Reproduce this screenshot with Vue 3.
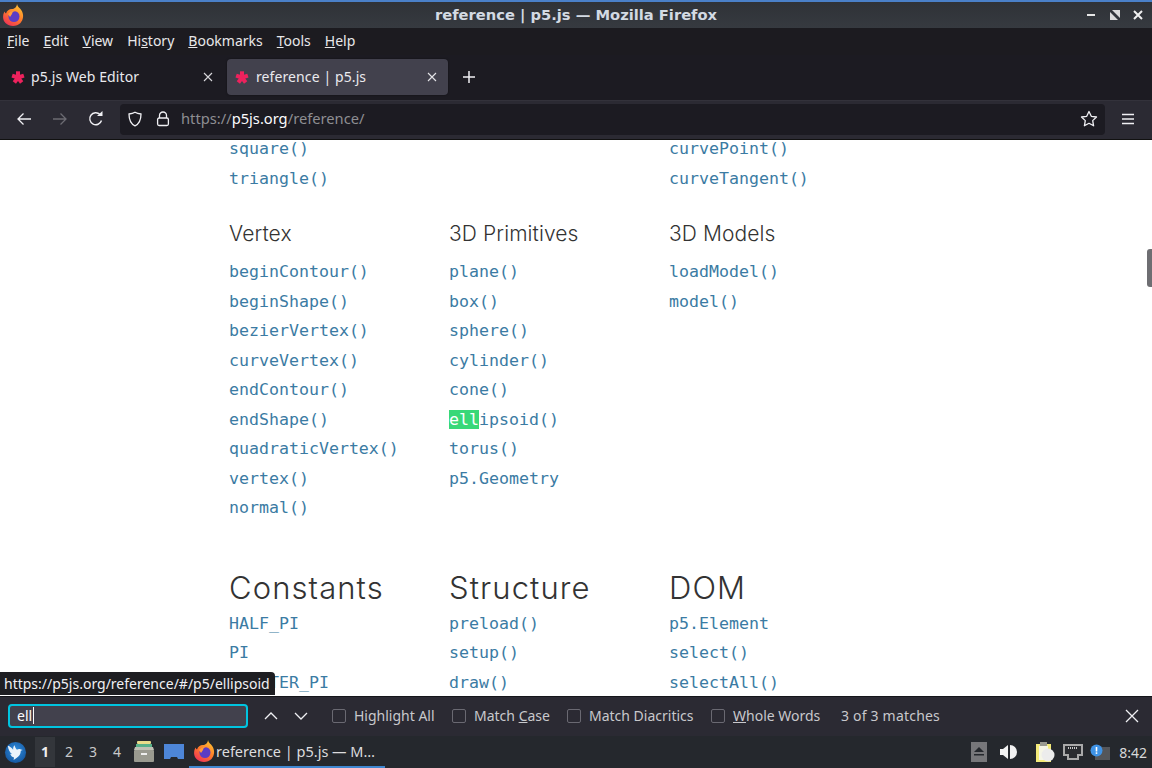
<script setup>
const menus = [
  { k: 'F', r: 'ile' }, { k: 'E', r: 'dit' }, { k: 'V', r: 'iew' },
  { a: 'Hi', k: 's', r: 'tory' }, { k: 'B', r: 'ookmarks' }, { k: 'T', r: 'ools' }, { k: 'H', r: 'elp' }
]
const topRows = [['square()', 'triangle()'], [], ['curvePoint()', 'curveTangent()']]
const mid = [
  { h: 'Vertex', items: ['beginContour()', 'beginShape()', 'bezierVertex()', 'curveVertex()', 'endContour()', 'endShape()', 'quadraticVertex()', 'vertex()', 'normal()'] },
  { h: '3D Primitives', items: ['plane()', 'box()', 'sphere()', 'cylinder()', 'cone()', 'ellipsoid()', 'torus()', 'p5.Geometry'] },
  { h: '3D Models', items: ['loadModel()', 'model()'] }
]
const low = [
  { h: 'Constants', items: ['HALF_PI', 'PI', 'QUARTER_PI'] },
  { h: 'Structure', items: ['preload()', 'setup()', 'draw()'] },
  { h: 'DOM', items: ['p5.Element', 'select()', 'selectAll()'] }
]
const checks = [
  { t: 'Highlight All', w: 119 }, { t: 'Match Case', w: 115 },
  { t: 'Match Diacritics', w: 144 }, { t: 'Whole Words', u: true, w: 130 }
]
const arms = [0, 72, 144, 216, 288]
</script>

<template>
  <div class="screen">
    <header class="titlebar">
      <svg class="fx" viewBox="0 0 24 24" width="24" height="24">
        <defs>
          <linearGradient id="fxo" x1="0.8" y1="0" x2="0.2" y2="1">
            <stop offset="0" stop-color="#ffc832" /><stop offset=".5" stop-color="#ff7a2a" /><stop offset="1" stop-color="#ee2f5a" />
          </linearGradient>
        </defs>
        <path d="M15 1c.5 3 3 4 4.500 6.500 2.500 4 2 9-1 12.500-4 4-11 4-15 0C.5 17 .5 12 2.500 8.500c.3 1 .8 1.500 1.500 2C5 7.500 7 6 10 6c2 0 5-2 5-5z" fill="url(#fxo)" />
        <circle cx="12" cy="13.500" r="5.500" fill="#5b3cc4" />
        <path d="M6 11c2-3 6-4 8-3-2 0-4 1-4 3l-2 3z" fill="#ff9a3c" />
      </svg>
      <div class="wintitle">reference | p5.js — Mozilla Firefox</div>
      <div class="winbtns">
        <svg viewBox="0 0 12 12" width="12" height="12"><rect x="1" y="5" width="8" height="2" fill="#e6e6e6" /></svg>
        <svg viewBox="0 0 12 12" width="12" height="12"><path d="M3 1h8v8zM1 3l8 8H1z" fill="#dcdcdc" /></svg>
        <svg viewBox="0 0 12 12" width="12" height="12"><path d="M2 2l8 8M10 2l-8 8" stroke="#f0f0f0" stroke-width="2" /></svg>
      </div>
    </header>

    <nav class="menubar">
      <span v-for="m in menus" :key="m.r" class="menu">{{ m.a }}<u>{{ m.k }}</u>{{ m.r }}</span>
    </nav>

    <div class="tabbar">
      <div class="tab">
        <svg class="star" viewBox="0 0 16 16" width="16" height="16"><path v-for="a in arms" :key="a" d="M8 8.500V2.300" stroke="#ed225d" stroke-width="4" :transform="`rotate(${a} 8 8.500)`" /></svg>
        <span class="tabtext">p5.js Web Editor</span>
        <svg class="close" viewBox="0 0 10 10" width="10" height="10"><path d="M1 1l8 8M9 1l-8 8" stroke="#d8d8dc" stroke-width="1.100" /></svg>
      </div>
      <div class="tab active">
        <svg class="star" viewBox="0 0 16 16" width="16" height="16"><path v-for="a in arms" :key="a" d="M8 8.500V2.300" stroke="#ed225d" stroke-width="4" :transform="`rotate(${a} 8 8.500)`" /></svg>
        <span class="tabtext">reference | p5.js</span>
        <svg class="close" viewBox="0 0 10 10" width="10" height="10"><path d="M1 1l8 8M9 1l-8 8" stroke="#e4e4e8" stroke-width="1.100" /></svg>
      </div>
      <svg class="plus" viewBox="0 0 14 14" width="14" height="14"><path d="M7 1v12M1 7h12" stroke="#f0f0f4" stroke-width="1.500" /></svg>
    </div>

    <div class="navbar">
      <svg class="navicon first" viewBox="0 0 16 16" width="16" height="16"><path d="M15 8H2M7.500 2.500L2 8l5.500 5.500" fill="none" stroke="#f0f0f4" stroke-width="1.300" /></svg>
      <svg class="navicon" viewBox="0 0 16 16" width="16" height="16"><path d="M1 8h13M8.500 2.500L14 8l-5.500 5.500" fill="none" stroke="#6c6b72" stroke-width="1.300" /></svg>
      <svg class="navicon" viewBox="0 0 16 16" width="16" height="16"><path d="M13.500 9.500A6 6 0 1 1 12 3.500" fill="none" stroke="#f0f0f4" stroke-width="1.400" /><path d="M9 5h5.500V0z" fill="#f0f0f4" /></svg>
      <div class="urlbar">
        <svg viewBox="0 0 16 16" width="16" height="16"><path d="M8 1.200c2 1.200 4 1.600 6 1.800 0 6-1.500 9.800-6 11.800C3.500 12.800 2 9 2 3c2-.2 4-.6 6-1.800z" fill="none" stroke="#f0f0f4" stroke-width="1.300" /></svg>
        <svg class="lock" viewBox="0 0 14 16" width="14" height="16"><path d="M3.500 7V4.500a3.500 3.500 0 0 1 7 0V7" fill="none" stroke="#f0f0f4" stroke-width="1.300" /><rect x="1.600" y="7" width="10.800" height="7.500" rx="1.500" fill="none" stroke="#f0f0f4" stroke-width="1.300" /></svg>
        <span class="url"><span class="dim">https://</span>p5js.org<span class="dim">/reference/</span></span>
        <svg class="bm" viewBox="0 0 18 18" width="18" height="18"><path d="M9 1.500l2.300 4.800 5.200.7-3.800 3.600.9 5.200L9 13.300l-4.600 2.500.9-5.200L1.500 7l5.200-.7z" fill="none" stroke="#f0f0f4" stroke-width="1.300" stroke-linejoin="round" /></svg>
      </div>
      <svg class="hamb" viewBox="0 0 14 12" width="14" height="12"><path d="M1 1.500h12M1 6h12M1 10.500h12" stroke="#f0f0f4" stroke-width="1.300" /></svg>
    </div>

    <main class="page">
      <div class="doc">
        <section class="grid">
          <div v-for="(col, i) in topRows" :key="i" class="col">
            <a v-for="t in col" :key="t" class="link">{{ t }}</a>
          </div>
        </section>
        <section class="grid middle">
          <div v-for="col in mid" :key="col.h" class="col">
            <h3>{{ col.h }}</h3>
            <a v-for="t in col.items" :key="t" class="link">
              <template v-if="t === 'ellipsoid()'"><mark>ell</mark>ipsoid()</template>
              <template v-else>{{ t }}</template>
            </a>
          </div>
        </section>
        <section class="grid lower">
          <div v-for="col in low" :key="col.h" class="col">
            <h2>{{ col.h }}</h2>
            <a v-for="t in col.items" :key="t" class="link">{{ t }}</a>
          </div>
        </section>
      </div>
      <div class="thumb"></div>
      <div class="status">https://p5js.org/reference/#/p5/ellipsoid</div>
    </main>

    <div class="findbar">
      <div class="findinput">ell<i class="caret"></i></div>
      <svg class="arrow up" viewBox="0 0 14 8" width="14" height="8"><path d="M1 7l6-6 6 6" fill="none" stroke="#f0f0f4" stroke-width="1.300" /></svg>
      <svg class="arrow" viewBox="0 0 14 8" width="14" height="8"><path d="M1 1l6 6 6-6" fill="none" stroke="#f0f0f4" stroke-width="1.300" /></svg>
      <div class="checks">
        <label v-for="c in checks" :key="c.t" class="check" :style="{ width: c.w + 'px' }">
          <i class="box"></i>
          <span v-if="c.u"><u>W</u>hole Words</span>
          <span v-else-if="c.t === 'Match Case'">Match <u>C</u>ase</span>
          <span v-else>{{ c.t }}</span>
        </label>
      </div>
      <span class="count">3 of 3 matches</span>
      <svg class="findclose" viewBox="0 0 14 14" width="14" height="14"><path d="M1 1l12 12M13 1L1 13" stroke="#f0f0f4" stroke-width="1.300" /></svg>
    </div>

    <footer class="taskbar">
      <svg class="start" viewBox="0 0 24 24" width="23" height="23">
        <defs>
          <radialGradient id="stb" cx=".5" cy=".4" r=".7"><stop offset="0" stop-color="#2f8fe0" /><stop offset="1" stop-color="#124f96" /></radialGradient>
        </defs>
        <circle cx="12" cy="12" r="11" fill="url(#stb)" />
        <path d="M4 5c2 .5 4 2 5.500 4C9.500 7 10 5.500 11 4.500c.5 2 1.200 3.500 2.500 4.500 1-.8 2.500-1 3.500-.5l2.500 1-2 .8c0 3-1.500 6-4.500 7.500l-3 2 .5-2.500c-2-.5-3.500-2-4-4l2 .5C6 12 4.500 9 4 5z" fill="#eaf3fb" />
      </svg>
      <div class="pager">
        <span class="desk on">1</span><span class="desk">2</span><span class="desk">3</span><span class="desk">4</span>
      </div>
      <svg class="launch" viewBox="0 0 22 22" width="22" height="22">
        <rect x="4" y="0" width="14" height="3" rx="1" fill="#e8dc8a" />
        <rect x="3" y="3" width="16" height="3" fill="#57b08a" />
        <path d="M2 6h18l1 3H1z" fill="#c0c0b4" />
        <rect x="1" y="9" width="20" height="12" rx="1" fill="#9a9a90" />
        <rect x="8" y="12" width="6" height="2" fill="#eee" />
      </svg>
      <svg class="launch folder" viewBox="0 0 22 18" width="22" height="18"><path d="M1 1h20v15h-6l-1-2H8l-1 2H1z" fill="#4d86d8" /></svg>
      <div class="task">
        <svg viewBox="0 0 24 24" width="24" height="24">
          <path d="M15 1c.5 3 3 4 4.500 6.500 2.500 4 2 9-1 12.500-4 4-11 4-15 0C.5 17 .5 12 2.500 8.500c.3 1 .8 1.500 1.500 2C5 7.500 7 6 10 6c2 0 5-2 5-5z" fill="url(#fxo)" />
          <circle cx="12" cy="13.500" r="5.500" fill="#5b3cc4" />
          <path d="M6 11c2-3 6-4 8-3-2 0-4 1-4 3l-2 3z" fill="#ff9a3c" />
        </svg>
        <span>reference | p5.js — M…</span>
      </div>
      <div class="tray">
        <svg viewBox="0 0 16 20" width="16" height="20"><rect width="16" height="20" fill="#77777a" /><path d="M8 5l5 5H3z" fill="#25282d" /><rect x="3" y="12" width="10" height="1.500" fill="#25282d" /></svg>
        <svg class="vol" viewBox="0 0 18 16" width="18" height="16"><path d="M1 5h3l5-4v14l-5-4H1z" fill="#f2f2f2" /><path d="M11 1a7 7 0 0 1 0 14z" fill="#f2f2f2" /></svg>
        <svg class="clip" viewBox="0 0 20 22" width="20" height="22"><rect x="1" y="3" width="15" height="18" fill="#f4eb7a" /><rect x="4" y="5" width="9" height="14" fill="#f6f6e6" /><rect x="5" y="1" width="7" height="4" fill="#9a9a90" /><circle cx="13" cy="14" r="6.500" fill="#ececec" /></svg>
        <svg class="net" viewBox="0 0 20 16" width="20" height="16"><path d="M1 1h18v10h-4v4H5v-4H1z" fill="#2a2c30" stroke="#a9a9a9" stroke-width="2" /><path d="M5 4h10" stroke="#c8c8c8" stroke-width="2" stroke-dasharray="1 1" /></svg>
        <svg class="notif" viewBox="0 0 20 16" width="20" height="16"><rect x="5" y="3" width="15" height="13" fill="#54565a" /><circle cx="6.500" cy="6.500" r="6" fill="#3f93e6" /><rect x="5.700" y="3" width="1.600" height="4.500" fill="#fff" /><rect x="5.700" y="8.300" width="1.600" height="1.600" fill="#fff" /></svg>
        <span class="clock">8:42</span>
      </div>
    </footer>
  </div>
</template>

<style>
html, body { margin: 0; background: #1c1b22; }
</style>

<style scoped>
.screen {
  width: 1152px; height: 768px; display: flex; flex-direction: column; overflow: hidden;
  font-family: "Noto Sans", sans-serif; color: #f0f0f4; font-size: 14px;
}
.titlebar {
  height: 26px; flex: none; border-top: 2px solid #4a80c8; display: flex; align-items: center;
  background: linear-gradient(#2f3237, #363a40); position: relative;
}
.fx { margin-left: 2px; }
.wintitle {
  position: absolute; left: 0; right: 0; top: 3px; text-align: center; font-family: "DejaVu Sans", sans-serif; font-weight: 700; font-size: 14.700px;
  color: #d3dae3; line-height: 20px;
}
.winbtns { margin-left: auto; display: flex; gap: 11px; padding-right: 8px; }
.menubar {
  height: 27px; box-sizing: border-box; padding: 0 0 2px 7px; flex: none; background: #1c1b20; display: flex; align-items: center; gap: 14px;
  color: #e8e8ea;
}
.menubar .menu { line-height: 20px; }
.tabbar {
  height: 45px; box-sizing: border-box; padding: 0 0 2px 3px; flex: none; display: flex; align-items: center; background: #1c1b22;
}
.tab {
  width: 221px; height: 36px; box-sizing: border-box; display: flex; align-items: center; padding: 0 11px 0 7px; border-radius: 4px;
  margin-right: 3px;
}
.tab.active { background: #42414d; box-shadow: 0 0 2px rgba(0,0,0,.5); }
.tabtext { margin-left: 6px; color: #eaeaee; letter-spacing: .1px; }
.tab:first-child .tabtext { margin-left: 5px; }
.close { margin-left: auto; }
.plus { margin-left: 11px; }
.navbar {
  height: 40px; flex: none; background: #2b2a33; display: flex; align-items: center; border-top: 1px solid #33323b;
  box-sizing: border-box; border-bottom: 1px solid #111; padding-bottom: 2px;
}
.navicon { margin-right: 20px; }
.navicon.first { margin-left: 16px; }
.urlbar {
  width: 985px; height: 31px; margin-left: -4px; background: #1c1b22; border-radius: 4px; display: flex; align-items: center;
  padding-left: 7px; box-sizing: border-box;
}
.lock { margin-left: 13px; }
.url { margin-left: 11px; font-size: 14.700px; color: #fbfbfe; line-height: 20px; padding-bottom: 2px; }
.dim { color: #8e8e92; }
.bm { margin-left: auto; margin-right: 7px; }
.hamb { margin-left: 16px; }
.page {
  flex: 1; background: #fff; position: relative; overflow: hidden; min-height: 0;
}
.doc { margin-top: -6px; padding-left: 229px; }
.grid { display: grid; grid-template-columns: repeat(3, 220px); }
.col { display: flex; flex-direction: column; align-items: flex-start; }
.link {
  font-family: "DejaVu Sans Mono", monospace; font-size: 16.600px; line-height: 29.500px; height: 29.500px; color: #3b7ba3;
}
mark { background: #38d878; color: #fff; }
h3 {
  margin: 0; font-family: Inter, sans-serif; font-weight: 350; font-size: 21px; line-height: 30px; color: #333; height: 47px;
  display: flex; align-items: center; letter-spacing: .1px;
}
h2 {
  margin: 0; font-family: Inter, sans-serif; font-weight: 300; font-size: 31px; line-height: 40px; color: #333; height: 41px;
  display: flex; align-items: center; letter-spacing: 1.100px;
}
.middle { margin-top: 17px; }
.lower { margin-top: 45px; height: 200px; }
.thumb { position: absolute; right: 0; top: 109px; width: 5px; height: 38px; background: #6e6e72; border-radius: 3px 0 0 3px; }
.status {
  position: absolute; left: 0; bottom: 1px; height: 23px; line-height: 23px; padding: 0 5px 0 4px; background: #1e1e22;
  color: #f0f0f4; font-size: 14px; border-radius: 0 4px 0 0;
}
.findbar {
  height: 41px; flex: none; background: #2b2a33; display: flex; align-items: center; border-top: 1px solid #15151a; box-sizing: border-box;
  color: #c8c8cc; padding-bottom: 3px;
}
.findinput {
  width: 240px; height: 24px; box-sizing: border-box; margin-left: 8px; border: 2px solid #00c4e0; border-radius: 4px; background: #42414d;
  padding-left: 7px; color: #fbfbfe; line-height: 21px; font-size: 14px; display: flex; align-items: center;
}
.caret { width: 1px; height: 17px; background: #fbfbfe; margin-left: 1px; }
.arrow { margin-left: 16px; }
.checks { display: flex; margin-left: 24px; }
.check { display: flex; align-items: center; gap: 8px; white-space: nowrap; }
.check:first-child { margin-right: 1px; }
.box { width: 14px; height: 14px; box-sizing: border-box; border: 1px solid #6a6972; border-radius: 2px; background: #2b2a33; flex: none; }
.count { letter-spacing: .2px; }
.findclose { margin-left: auto; margin-right: 13px; }
.taskbar {
  height: 32px; flex: none; background: #25282d; display: flex; align-items: center; color: #d8d8da; margin-top: -1px; position: relative;
}
.start { margin-left: 4px; }
.pager { display: flex; margin-left: 6px; font-size: 14px; }
.desk { width: 24px; text-align: center; line-height: 30px; color: #c8c8ca; }
.desk.on { background: #33363b; color: #eee; font-weight: 700; width: 20px; margin-left: 2px; margin-right: 2px; }
.launch { margin-left: 4px; }
.folder { margin-left: 8px; }
.task {
  margin-left: 4px; width: 196px; height: 31px; box-sizing: border-box; border-bottom: 2px solid #3f87d0; display: flex; align-items: center;
  font-size: 14.500px; white-space: nowrap; padding-left: 4px; color: #dcdcde;
}
.task span { margin-left: -1px; }
.tray { margin-left: auto; display: flex; align-items: center; }
.vol { margin-left: 12px; }
.clip { margin-left: 18px; }
.net { margin-left: 8px; }
.notif { margin-left: 7px; }
.clock { margin-left: 9px; margin-right: 5px; font-size: 14px; color: #d8d8da; }
</style>
